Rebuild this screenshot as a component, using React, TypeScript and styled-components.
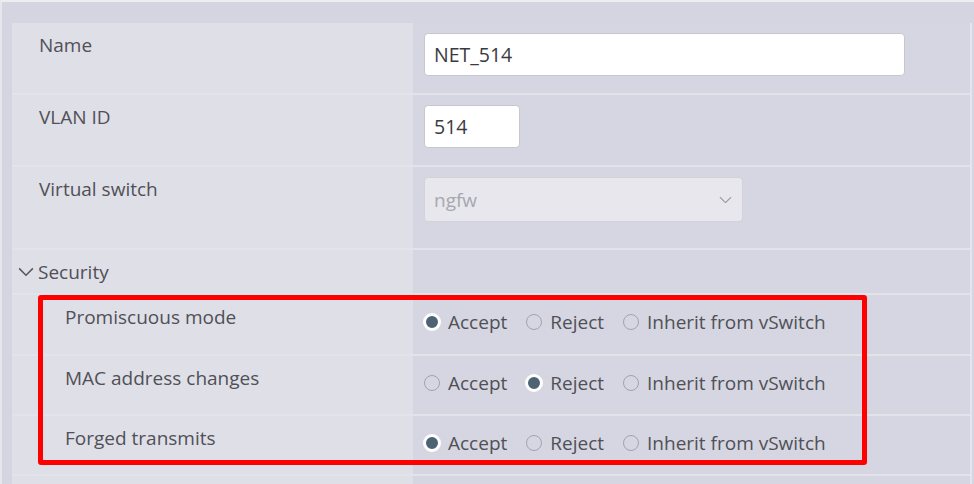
import React from "react";
import styled, { createGlobalStyle } from "styled-components";

const Global = createGlobalStyle`
  html, body { margin: 0; padding: 0; }
  body {
    background: #d4d5e0;
    font-family: "Open Sans", "Liberation Sans", sans-serif;
    color: #4d4d52;
  }
`;

const Frame = styled.div`
  position: relative;
  width: 974px;
  height: 484px;
  box-sizing: border-box;
  overflow: hidden;
  background: #d4d5e0;
  border-top: 2px solid #ececf1;
  border-left: 2px solid #e6e6ec;
  padding: 21px 0 0 10px;
`;

const Table = styled.div`
  width: 958px;
  border-right: 2px solid #e4e4ea;
`;

const Row = styled.div<{ $h: number }>`
  display: grid;
  grid-template-columns: 401px 1fr;
  height: ${(p) => p.$h}px;
  box-sizing: border-box;
  border-bottom: 2px solid #e3e3ea;
`;

const LabelCell = styled.div<{ $indent?: boolean }>`
  background: #dfdfe8;
  padding: 11px 0 0 ${(p) => (p.$indent ? 53 : 27)}px;
  font-size: 19px;
  line-height: 22px;
  color: #505056;
  display: flex;
  align-items: flex-start;
`;

const SectionLabel = styled(LabelCell)`
  padding-left: 6px;
`;

const ValueCell = styled.div<{ $top?: number }>`
  background: #d5d6e1;
  padding: ${(p) => p.$top ?? 10}px 0 0 11px;
  box-sizing: border-box;
`;

const TextInput = styled.div<{ $w: number }>`
  width: ${(p) => p.$w}px;
  height: 43px;
  box-sizing: border-box;
  background: #ffffff;
  border: 1px solid #c7c7cf;
  border-radius: 4px;
  padding: 0 9px;
  font-size: 19.5px;
  line-height: 41px;
  color: #3a3a3f;
`;

const Select = styled.div`
  width: 319px;
  height: 45px;
  box-sizing: border-box;
  background: #e7e7ed;
  border: 1px solid #d2d2da;
  border-radius: 4px;
  padding: 0 10px 0 9px;
  display: flex;
  align-items: center;
  justify-content: space-between;
  font-size: 19px;
  color: #a7a7af;
`;

const RadioGroup = styled.div`
  display: flex;
  align-items: center;
  height: 22px;
  font-size: 19px;
  color: #505056;
`;

const RadioOption = styled.label`
  display: flex;
  align-items: center;
  margin-right: 19px;
  gap: 8px;
`;

const RadioDot = styled.span<{ $on: boolean }>`
  display: inline-block;
  flex: none;
  box-sizing: border-box;
  width: ${(p) => (p.$on ? 18 : 16)}px;
  height: ${(p) => (p.$on ? 18 : 16)}px;
  margin: ${(p) => (p.$on ? "0 -1px" : "0")};
  border-radius: 50%;
  border: ${(p) => (p.$on ? "3.5px solid #ffffff" : "1px solid #a3a3ad")};
  background: ${(p) => (p.$on ? "#4d6272" : "transparent")};
`;

const Highlight = styled.div`
  position: absolute;
  left: 36px;
  top: 293px;
  width: 829px;
  height: 170px;
  box-sizing: border-box;
  border: 5px solid #ff0000;
  border-radius: 3px;
  pointer-events: none;
`;

const Chevron = ({ color, size }: { color: string; size: number }) => (
  <svg width={size} height={size * 0.6} viewBox="0 0 14 8" fill="none">
    <polyline points="1,1 7,7 13,1" stroke={color} strokeWidth="1.3" />
  </svg>
);

const options = ["Accept", "Reject", "Inherit from vSwitch"];

const RadioRow = ({ value }: { value: number }) => (
  <RadioGroup>
    {options.map((o, i) => (
      <RadioOption key={o}>
        <RadioDot $on={i === value} />
        {o}
      </RadioOption>
    ))}
  </RadioGroup>
);

const SecRow = styled.div`
  display: flex;
  align-items: center;
  gap: 4px;
`;

export default function App() {
  return (
    <>
      <Global />
      <Frame>
        <Table>
          <Row $h={72}>
            <LabelCell>Name</LabelCell>
            <ValueCell>
              <TextInput $w={481}>NET_514</TextInput>
            </ValueCell>
          </Row>
          <Row $h={72}>
            <LabelCell>VLAN ID</LabelCell>
            <ValueCell>
              <TextInput $w={96}>514</TextInput>
            </ValueCell>
          </Row>
          <Row $h={83}>
            <LabelCell>Virtual switch</LabelCell>
            <ValueCell>
              <Select>
                ngfw
                <Chevron color="#9c9ca5" size={13} />
              </Select>
            </ValueCell>
          </Row>
          <Row $h={45}>
            <SectionLabel>
              <SecRow>
                <Chevron color="#55555b" size={16} />
                Security
              </SecRow>
            </SectionLabel>
            <ValueCell />
          </Row>
          <Row $h={61}>
            <LabelCell $indent>Promiscuous mode</LabelCell>
            <ValueCell $top={16}>
              <RadioRow value={0} />
            </ValueCell>
          </Row>
          <Row $h={60}>
            <LabelCell $indent>MAC address changes</LabelCell>
            <ValueCell $top={16}>
              <RadioRow value={1} />
            </ValueCell>
          </Row>
          <Row $h={60}>
            <LabelCell $indent>Forged transmits</LabelCell>
            <ValueCell $top={16}>
              <RadioRow value={0} />
            </ValueCell>
          </Row>
          <Row $h={40}>
            <LabelCell />
            <ValueCell />
          </Row>
        </Table>
        <Highlight />
      </Frame>
    </>
  );
}
